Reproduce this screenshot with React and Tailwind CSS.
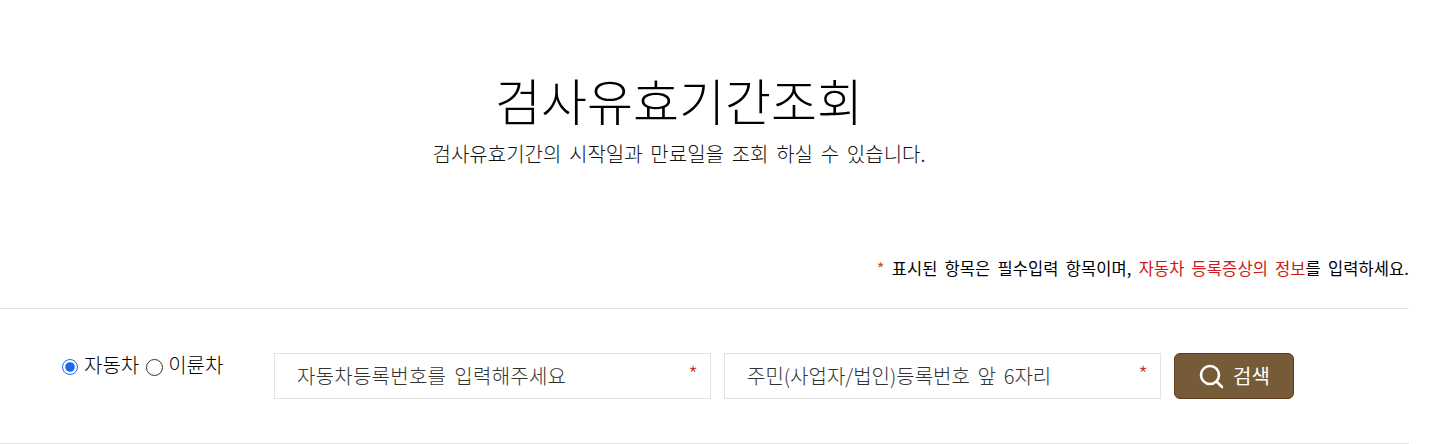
export default function App() {
  return (
    <div className="w-[1449px] h-[444px] overflow-hidden bg-white font-['Noto_Sans_CJK_KR','Noto_Sans',sans-serif]">
      <div className="w-[1409px]">
        <div className="pt-[66px] pr-[51px] flex flex-col items-center">
          <h1 className="text-[50px] leading-[66px] font-light text-black">검사유효기간조회</h1>
          <p className="mt-[9px] text-[20px] leading-[26px] text-[#111] [word-spacing:3.3px] font-light">검사유효기간의 시작일과 만료일을 조회 하실 수 있습니다.</p>
        </div>
        <p className="mt-[91px] text-right text-[16.5px] leading-[20px] text-black [word-spacing:3.4px] tracking-[0.08px]">
          <span className="text-[#c0532b]">*</span> 표시된 항목은 필수입력 항목이며, <span className="text-[#d01818]">자동차 등록증상의 정보</span>를 입력하세요.
        </p>
        <div className="mt-[30px] border-t border-b border-[#e3e3e3] h-[136px] pt-[44px] flex items-start">
          <div className="ml-[62px] w-[212px] flex items-center text-[20px] leading-[26px] text-black font-light">
            <input type="radio" name="kind" defaultChecked className="w-[16px] h-[16px] m-0 mt-[3px] accent-[#1a66f0]" />
            <span className="ml-[6px] -mt-[1px]">자동차</span>
            <input type="radio" name="kind" className="w-[17px] h-[17px] m-0 ml-[7px] mt-[3px] appearance-none rounded-full border border-[#333]" />
            <span className="ml-[5px] -mt-[2px]">이륜차</span>
          </div>
          <div className="relative w-[437px] h-[46px]">
            <input placeholder="자동차등록번호를 입력해주세요" className="w-full h-full border border-[#e3e3e3] pl-[22px] pb-[2px] text-[20px] font-light text-[#333] placeholder:text-[#333] outline-none tracking-[0.25px] [word-spacing:3.5px]" />
            <span className="absolute right-[13px] top-[4px] text-[22px] font-light text-[#c0392b]">*</span>
          </div>
          <div className="relative w-[437px] h-[46px] ml-[13px]">
            <input placeholder="주민(사업자/법인)등록번호 앞 6자리" className="w-full h-full border border-[#e3e3e3] pl-[22px] pb-[2px] text-[20px] font-light text-[#333] placeholder:text-[#333] outline-none [word-spacing:3.3px]" />
            <span className="absolute right-[13px] top-[4px] text-[22px] font-light text-[#c0392b]">*</span>
          </div>
          <button className="ml-[13px] w-[120px] h-[46px] rounded-[6px] bg-[#755b38] border border-[#5c3a1a] flex items-center justify-center gap-[9px] text-white text-[20px]">
            <svg width="26" height="26" viewBox="0 0 26 26" fill="none" stroke="white" strokeWidth="2.6" strokeLinecap="round"><circle cx="12" cy="12" r="9" /><path d="M18.5 18.5L24 24" /></svg>
            <span>검색</span>
          </button>
        </div>
      </div>
    </div>
  );
}
